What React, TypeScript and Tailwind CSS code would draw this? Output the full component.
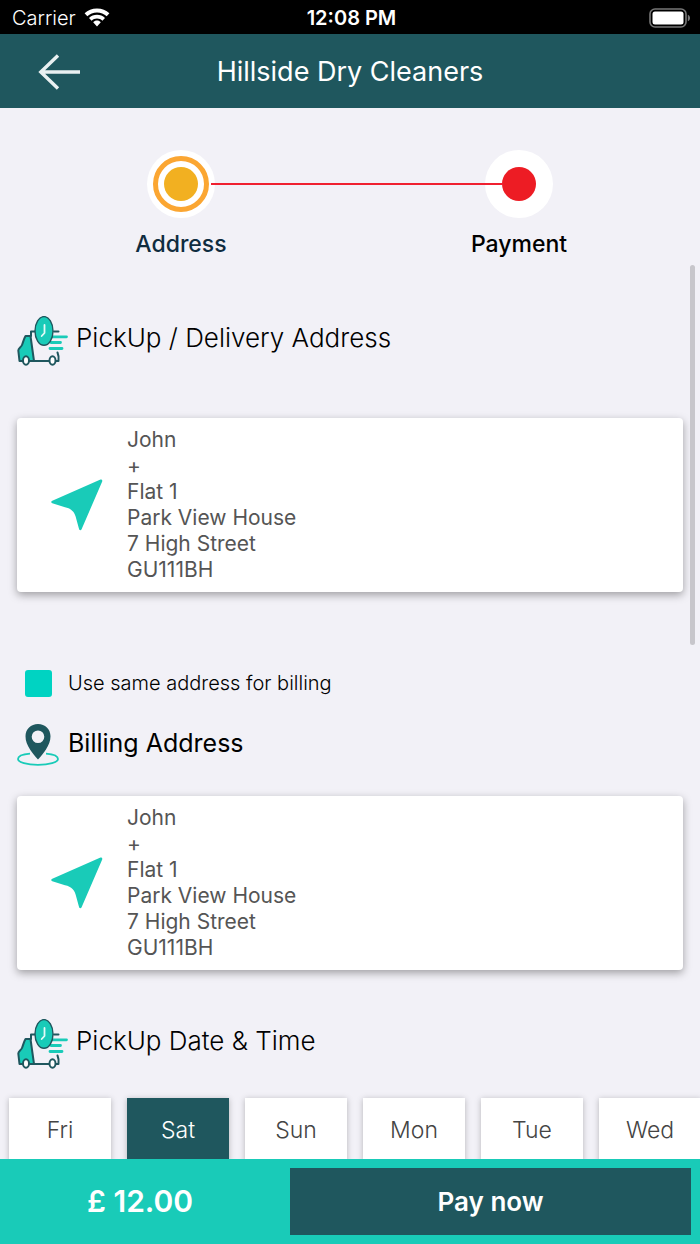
import React, { useState } from 'react';

const ADDRESS = ['John', '+', 'Flat 1', 'Park View House', '7 High Street', 'GU111BH'];
const DAYS = ['Fri', 'Sat', 'Sun', 'Mon', 'Tue', 'Wed'];

const WifiIcon = () => (
    <svg width="26" height="19" viewBox="0 0 26 19" fill="#fff" aria-hidden="true">
        <path d="M13 .5c4.900 0 9.200 1.800 12.400 4.800l-2.700 3C20.100 5.900 16.700 4.400 13 4.400S5.900 5.900 3.300 8.300L.6 5.300C3.800 2.300 8.100.5 13 .5z" />
        <path d="M13 6.700c3 0 5.900 1.200 8 3.200l-2.600 2.900C17 11.400 15.100 10.500 13 10.500s-4 .9-5.400 2.300L5 9.900c2.100-2 5-3.200 8-3.200z" />
        <path d="M13 12.600c1.500 0 2.800.6 3.800 1.600L13 18.400l-3.800-4.200c1-1 2.300-1.600 3.800-1.600z" />
    </svg>
);

const BatteryIcon = () => (
    <svg width="42" height="20" viewBox="0 0 42 20" aria-hidden="true">
        <rect x="1" y="1" width="36" height="18" rx="5" fill="none" stroke="#777" strokeWidth="1.6" />
        <rect x="3.5" y="3.5" width="31" height="13" rx="2.5" fill="#fff" />
        <path d="M38.8 6.8c1.500.5 2.200 1.700 2.200 3.200s-.7 2.700-2.200 3.200z" fill="#777" />
    </svg>
);

const BackIcon = () => (
    <svg width="42" height="36" viewBox="0 0 42 36" fill="none" stroke="#e9f0f1" strokeWidth="3.4" aria-hidden="true">
        <path d="M42 18H3M20 1.5L2.800 18L20 34.500" />
    </svg>
);

const VanIcon = () => (
    <svg width="51" height="50" viewBox="0 0 51 50" fill="none" strokeLinecap="round" strokeLinejoin="round" aria-hidden="true">
        <g stroke="#1f575e" strokeWidth="2">
            <path d="M18 15.500h-4v4.500M37 15.500h4.500" />
            <path d="M13.500 20H8.500C7 22.500 6.200 26 5 29c-1 2.500-3.700 3-3.700 5.500L2.500 45H17z" fill="#19cbb8" />
            <path d="M17 45h24.500c.4-3.500.1-6-1-8.500" />
            <ellipse cx="9" cy="44.500" rx="3" ry="4.200" fill="#fff" />
            <ellipse cx="35.500" cy="44.500" rx="3" ry="4.200" fill="#fff" />
        </g>
        <path d="M35 20.800h14.500M34 26.500h9.500M33 32.500h12" stroke="#19cbb8" strokeWidth="2.800" />
        <ellipse cx="27" cy="14.900" rx="9" ry="14.300" fill="#19cbb8" stroke="#1f575e" strokeWidth="1.400" />
        <path d="M27.500 9v8l-2.800 3" stroke="#e4faf7" strokeWidth="1.800" />
    </svg>
);

const PinIcon = () => (
    <svg width="42" height="43" viewBox="0 0 42 43" aria-hidden="true">
        <path d="M13 30.600C6 31.200 1 33.300 1 36c0 3.300 8.900 5.800 20 5.800S41 39.300 41 36c0-2.700-5-4.800-12-5.400" fill="none" stroke="#19cbb8" strokeWidth="1.8" />
        <path
            fillRule="evenodd"
            d="M21 1C13.900 1 8.500 6.200 8.500 13.200c0 4.800 1.700 8.800 4.700 13.500 2.200 3.500 5 6.800 7.800 9.800 2.800-3 5.600-6.300 7.800-9.800 3-4.700 4.700-8.700 4.700-13.500C33.500 6.200 28.100 1 21 1zm0 6.500a6.300 6.300 0 1 1 0 12.600 6.300 6.300 0 0 1 0-12.600z"
            fill="#1f575e"
        />
    </svg>
);

const ArrowIcon = () => (
    <svg width="52" height="52" viewBox="0 0 52 52" fill="#19cbb8" className="shrink-0" aria-hidden="true">
        <path d="M49.500.6c1.200-.4 2.100.6 1.700 1.800L30.600 50.300c-.6 1.400-2 1.400-2.500 0L25.300 40c-1.500-7-4.700-10.300-11.300-11.700L1.300 24.200c-1.400-.5-1.400-1.800 0-2.400z" />
    </svg>
);

const AddressCard = ({ lines }: { lines: string[] }) => (
    <div className="mx-[17px] flex items-center rounded bg-white py-[9px] pl-[34px] shadow-[0_3px_8px_rgba(0,0,0,0.35)]">
        <ArrowIcon />
        <address className="ml-6 text-[21px] leading-[26px] text-[#555] not-italic">
            {lines.map((line) => (
                <div key={line}>{line}</div>
            ))}
        </address>
    </div>
);

export default function App() {
    const [sameAddress, setSameAddress] = useState(true);
    const [day, setDay] = useState('Sat');

    return (
        <div className="flex h-screen flex-col overflow-hidden bg-[#f2f1f7] font-['Inter',sans-serif] text-black">
            {/* Status bar */}
            <div className="grid h-[34px] shrink-0 grid-cols-3 items-center bg-black pt-px pr-[9px] pl-3 text-xl text-white">
                <div className="flex items-center gap-2 font-light">
                    Carrier
                    <WifiIcon />
                </div>
                <div className="text-center font-semibold">12:08 PM</div>
                <div className="flex justify-end">
                    <BatteryIcon />
                </div>
            </div>

            <header className="grid h-[74px] shrink-0 grid-cols-[1fr_auto_1fr] items-center bg-[#1f575e] px-[38px] pt-[2px] text-white">
                <button type="button" aria-label="Back" className="justify-self-start">
                    <BackIcon />
                </button>
                <h1 className="text-[27px]">Hillside Dry Cleaners</h1>
            </header>

            {/* Checkout steps */}
            <ol className="mt-[42px] flex shrink-0 px-[21%] text-[23px] leading-7 font-medium">
                <li className="flex w-[68px] flex-col items-center gap-3">
                    <span className="flex size-[68px] shrink-0 items-center justify-center rounded-full bg-white">
                        <span className="flex size-14 items-center justify-center rounded-full border-[5px] border-[#fba632]">
                            <span className="size-[34px] rounded-full bg-[#f2b021]" />
                        </span>
                    </span>
                    <span className="text-[#0f2c3f]">Address</span>
                </li>
                <li aria-hidden="true" className="z-10 mt-[33px] -mr-[18px] -ml-1 h-[2px] flex-1 bg-[#f02030]" />
                <li className="flex w-[68px] flex-col items-center gap-3">
                    <span className="flex size-[68px] shrink-0 items-center justify-center rounded-full bg-white">
                        <span className="size-[34px] rounded-full bg-[#ed1c24]" />
                    </span>
                    <span>Payment</span>
                </li>
            </ol>

            <main className="relative min-h-0 flex-1 overflow-hidden pt-[58px]">
                <div className="absolute top-[7px] right-[5px] h-[380px] w-[5px] rounded-full bg-[#c7c6cb]" />

                <div className="flex items-center gap-2 pl-[17px]">
                    <VanIcon />
                    <h2 className="pb-[6px] text-[26px] leading-8 font-light">PickUp / Delivery Address</h2>
                </div>
                <div className="mt-[52px]">
                    <AddressCard lines={ADDRESS} />
                </div>

                <label className="mt-[77px] flex items-center gap-4 pl-[25px] text-xl leading-7 font-light">
                    <input
                        type="checkbox"
                        checked={sameAddress}
                        onChange={(e) => setSameAddress(e.target.checked)}
                        className="size-[27px] appearance-none rounded-[3px] border-2 border-[#00d3c2] checked:bg-[#00d3c2]"
                    />
                    Use same address for billing
                </label>

                <div className="mt-[26px] flex items-center gap-[9px] pl-[17px]">
                    <PinIcon />
                    <h2 className="pb-1 text-[25px] leading-8">Billing Address</h2>
                </div>
                <div className="mt-[30px]">
                    <AddressCard lines={ADDRESS} />
                </div>

                <div className="mt-[49px] flex items-center gap-2 pl-[17px]">
                    <VanIcon />
                    <h2 className="pb-[6px] text-[26px] leading-8 font-light">PickUp Date &amp; Time</h2>
                </div>
                <div className="mt-[22px] flex gap-4 overflow-hidden px-[9px] pt-[7px] pb-6 text-[23px] font-light">
                    {DAYS.map((d) => (
                        <button
                            key={d}
                            type="button"
                            onClick={() => setDay(d)}
                            className={`h-16 w-[102px] shrink-0 shadow-[0_1px_6px_rgba(0,0,0,0.25)] ${
                                d === day ? 'bg-[#1f575e] text-white' : 'bg-white text-[#444]'
                            }`}
                        >
                            {d}
                        </button>
                    ))}
                </div>
            </main>

            <footer className="z-10 flex h-[85px] shrink-0 items-stretch bg-[#19cbb8] py-[9px] pr-[9px] text-white">
                <div className="flex w-[42%] items-center justify-center pr-[10px] text-[30px] font-semibold">£ 12.00</div>
                <button type="button" className="flex-1 bg-[#1f575e] text-[26px] font-semibold">
                    Pay now
                </button>
            </footer>
        </div>
    );
}
